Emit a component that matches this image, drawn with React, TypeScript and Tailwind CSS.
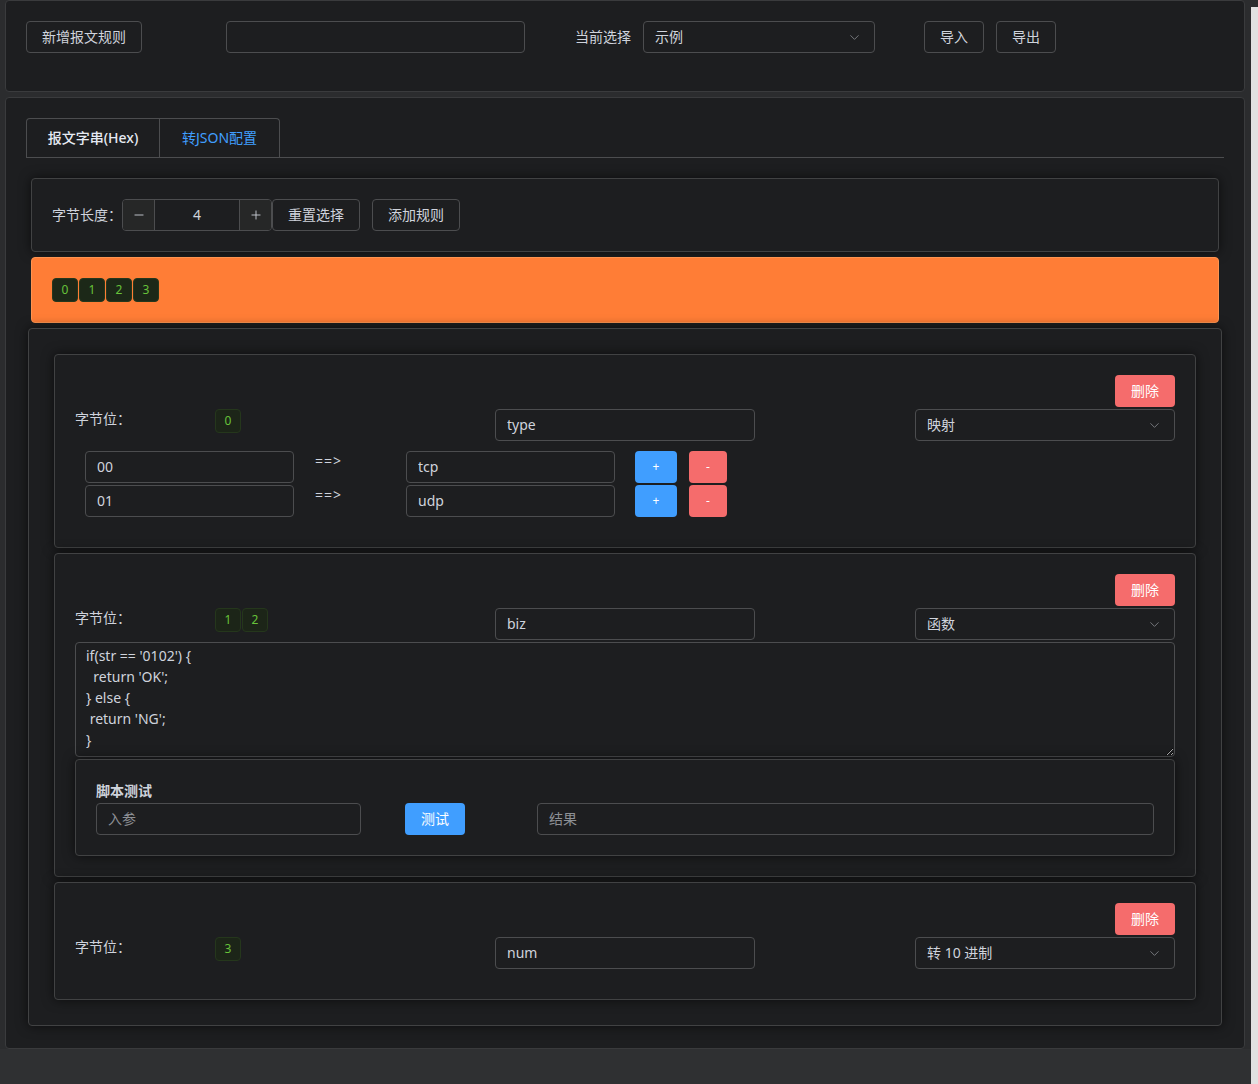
import { ChevronDown, Minus, Plus } from "lucide-react";

const font = "font-['Noto_Sans','Noto_Sans_CJK_SC',sans-serif]";

function Btn({ children, className = "" }: { children: React.ReactNode; className?: string }) {
  return (
    <button
      className={`flex h-8 items-center justify-center rounded-[4px] border border-[#4c4d4f] bg-transparent text-sm text-[#cfd3dc] ${className}`}
    >
      {children}
    </button>
  );
}

function Field({
  value,
  placeholder,
  className = "",
}: {
  value?: string;
  placeholder?: string;
  className?: string;
}) {
  return (
    <input
      defaultValue={value}
      placeholder={placeholder}
      className={`h-8 rounded-[4px] border border-[#4c4d4f] bg-transparent px-[11px] pb-px text-sm text-[#cfd3dc] outline-none placeholder:text-[#8d9095] ${className}`}
    />
  );
}

function Select({ value, className = "" }: { value: string; className?: string }) {
  return (
    <div
      className={`flex h-8 items-center justify-between rounded-[4px] border border-[#4c4d4f] pl-[11px] pr-[12px] text-sm text-[#cfd3dc] ${className}`}
    >
      <span>{value}</span>
      <ChevronDown size={15} strokeWidth={1.25} className="text-[#8d9095]" />
    </div>
  );
}

function Tags({ items, solid = false }: { items: string[]; solid?: boolean }) {
  return (
    <div className="flex gap-px">
      {items.map((t) => (
        <span
          key={t}
          className={`flex h-6 w-[26px] items-center justify-center rounded-[4px] border text-xs text-[#67c23a] ${
            solid ? "border-[#25371c] bg-[#1c2818]" : "border-[#25371c] bg-[#1c2518]"
          }`}
        >
          {t}
        </span>
      ))}
    </div>
  );
}

function RuleHead({ tags, name, kind }: { tags: string[]; name: string; kind: string }) {
  return (
    <>
      <div className="flex justify-end">
        <button className="h-8 w-[60px] rounded-[4px] bg-[#f56c6c] text-sm text-white">删除</button>
      </div>
      <div className="mt-[2px] grid grid-cols-[420px_260px_1fr_260px] items-start">
        <div className="flex items-start">
          <span className="w-[140px] text-sm leading-[20px] text-[#cfd3dc]">字节位：</span>
          <Tags items={tags} />
        </div>
        <Field value={name} className="w-[260px]" />
        <div />
        <Select value={kind} />
      </div>
    </>
  );
}

function Card({ children, className = "" }: { children: React.ReactNode; className?: string }) {
  return (
    <div
      className={`rounded-[4px] border border-[#414243] bg-[#1d1e20] shadow-[0_0_12px_rgba(0,0,0,0.6)] ${className}`}
    >
      {children}
    </div>
  );
}

function MapRow({ from, to }: { from: string; to: string }) {
  return (
    <div className="flex items-start pl-[10px]">
      <Field value={from} className="w-[209px]" />
      <span className="w-[112px] pl-[21px] text-sm leading-[20px] tracking-[1px] text-[#cfd3dc]">==&gt;</span>
      <Field value={to} className="w-[209px]" />
      <button className="ml-[20px] h-8 w-[42px] rounded-[4px] bg-[#409eff] text-xs text-white">+</button>
      <button className="ml-[12px] h-8 w-[38px] rounded-[4px] bg-[#f56c6c] text-xs text-white">-</button>
    </div>
  );
}

const script = `if(str == '0102') {
  return 'OK';
} else {
 return 'NG';
}`;

export default function App() {
  return (
    <div className={`flex min-h-[1084px] bg-[#2b2c2e] ${font}`}>
      <div className="flex w-[1251px] flex-col">
        {/* toolbar */}
        <div className="ml-[5px] h-[92px] w-[1240px] rounded-[4px] border border-[#3a3b3d] bg-[#1d1e20] px-5 pt-5">
          <div className="flex items-center">
            <Btn className="w-[116px]">新增报文规则</Btn>
            <Field className="ml-[84px] w-[299px]" />
            <span className="ml-[50px] text-sm text-[#cfd3dc]">当前选择</span>
            <Select value="示例" className="ml-[12px] w-[232px]" />
            <Btn className="ml-[49px] w-[60px]">导入</Btn>
            <Btn className="ml-[12px] w-[60px]">导出</Btn>
          </div>
        </div>

        {/* main panel */}
        <div className="ml-[5px] mt-[5px] h-[952px] w-[1240px] rounded-[4px] border border-[#3a3b3d] bg-[#1d1e20] pl-5 pr-5 pt-5">
          <div className="flex h-10 border-b border-[#4c4d4f]">
            <div className="flex overflow-hidden rounded-t-[4px] border border-b-0 border-[#4c4d4f]">
              <span className="flex w-[132px] items-center justify-center text-sm font-medium text-[#e5eaf3]">
                报文字串(Hex)
              </span>
              <span className="flex w-[120px] items-center justify-center border-l border-[#4c4d4f] text-sm text-[#409eff]">
                转JSON配置
              </span>
            </div>
          </div>

          <div className="pt-5">
            <div className="px-[5px]">
              <Card className="h-[74px] px-5 pt-5">
                <div className="flex items-center">
                  <span className="text-sm text-[#cfd3dc]">字节长度：</span>
                  <div className="flex h-8 w-[150px] overflow-hidden rounded-[4px] border border-[#4c4d4f]">
                    <span className="flex w-8 items-center justify-center border-r border-[#4c4d4f] bg-[#262727] text-[#cfd3dc]">
                      <Minus size={14} strokeWidth={1.5} />
                    </span>
                    <span className="flex flex-1 items-center justify-center text-sm text-[#cfd3dc]">4</span>
                    <span className="flex w-8 items-center justify-center border-l border-[#4c4d4f] bg-[#262727] text-[#cfd3dc]">
                      <Plus size={14} strokeWidth={1.5} />
                    </span>
                  </div>
                  <Btn className="w-[88px]">重置选择</Btn>
                  <Btn className="ml-[12px] w-[88px]">添加规则</Btn>
                </div>
              </Card>

              <div className="mt-[5px] h-[66px] rounded-[4px] border border-[#ff9450] bg-[#ff7d36] px-5 pt-5">
                <Tags items={["0", "1", "2", "3"]} solid />
              </div>
            </div>

            <div className="mt-[5px] px-[2px]">
              <Card className="flex flex-col gap-[5px] p-[25px]">
                {/* rule 1 */}
                <Card className="px-5 pb-[30px] pt-5">
                  <RuleHead tags={["0"]} name="type" kind="映射" />
                  <div className="mt-[10px] flex flex-col gap-[2px]">
                    <MapRow from="00" to="tcp" />
                    <MapRow from="01" to="udp" />
                  </div>
                </Card>

                {/* rule 2 */}
                <Card className="px-5 pb-5 pt-5">
                  <RuleHead tags={["1", "2"]} name="biz" kind="函数" />
                  <textarea
                    defaultValue={script}
                    className="mt-[2px] block h-[115px] w-full rounded-[4px] border border-[#4c4d4f] bg-transparent px-[10px] pt-[2px] text-sm leading-[21px] text-[#cfd3dc] outline-none"
                  />
                  <Card className="mt-[2px] h-[97px] px-5 pt-5">
                    <div className="text-sm font-semibold leading-[21px] text-[#cfd3dc]">脚本测试</div>
                    <div className="mt-[2px] flex items-center">
                      <Field placeholder="入参" className="w-[265px]" />
                      <button className="ml-[44px] h-8 w-[60px] rounded-[4px] bg-[#409eff] text-sm text-white">测试</button>
                      <Field placeholder="结果" className="ml-[72px] w-[617px]" />
                    </div>
                  </Card>
                </Card>

                {/* rule 3 */}
                <Card className="px-5 pb-[30px] pt-5">
                  <RuleHead tags={["3"]} name="num" kind="转 10 进制" />
                </Card>
              </Card>
            </div>
          </div>
        </div>
        <div className="flex-1 bg-[#2f3032]" />
      </div>
      <div className="mt-[7px] w-[7px] bg-[#e1e1e1]" />
    </div>
  );
}
